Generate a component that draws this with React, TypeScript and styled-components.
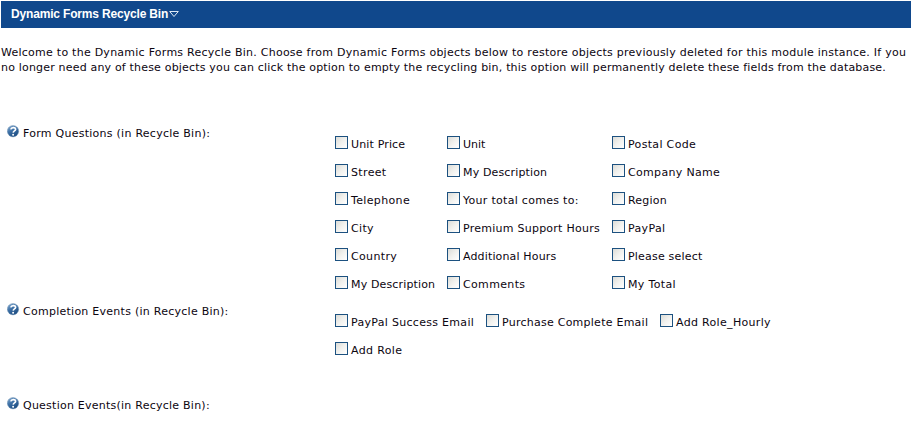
import React from "react";
import styled, { createGlobalStyle } from "styled-components";

const GlobalStyle = createGlobalStyle`
  * { box-sizing: border-box; }
  body {
    margin: 0;
    background: #fff;
    color: #0c0510;
    font: 11px/15px Verdana, "DejaVu Sans", sans-serif;
  }
`;

const Page = styled.main`
  width: 918px;
  height: 441px;
  padding: 1px 0 0 1px;
  overflow: hidden;
`;

const TitleBar = styled.header`
  display: flex;
  align-items: center;
  width: 910px;
  height: 27px;
  padding: 0 0 1px 10px;
  background: #10488c;
`;

const Title = styled.h1`
  margin: 0;
  color: #fff;
  font: bold 12px/15px Arial, "Liberation Sans", sans-serif;
  letter-spacing: -0.17px;
`;

const Arrow = styled.svg`
  display: block;
  margin-left: 1px;
`;

const Intro = styled.p`
  margin: 17px 0 0;
  white-space: nowrap;
`;

const Line = styled.span<{ $spacing: number }>`
  display: block;
  letter-spacing: ${(p) => p.$spacing}px;
`;

const Sections = styled.div`
  padding-top: 50px;
`;

const Section = styled.section<{ $height: number }>`
  display: grid;
  grid-template-columns: 334px 1fr;
  height: ${(p) => p.$height}px;
`;

const SectionLabel = styled.div<{ $spacing: number }>`
  display: flex;
  align-items: flex-start;
  gap: 3px;
  padding-left: 6px;
  letter-spacing: ${(p) => p.$spacing}px;
  white-space: nowrap;
`;

const LabelText = styled.span`
  padding-top: 1px;
`;

const Options = styled.div<{ $columns: string }>`
  display: grid;
  grid-template-columns: ${(p) => p.$columns};
  grid-auto-rows: 28px;
  padding-top: 11px;
`;

const Option = styled.label<{ $spacing: number }>`
  display: flex;
  align-items: flex-start;
  gap: 3px;
  letter-spacing: ${(p) => p.$spacing}px;
  white-space: nowrap;
`;

const OptionText = styled.span`
  padding-top: 1px;
`;

const Checkbox = styled.input`
  appearance: none;
  flex: none;
  width: 13px;
  height: 13px;
  margin: 0;
  border: 1px solid #1c5180;
  background: linear-gradient(135deg, #dcdcd7 0%, #f1f1ee 50%, #fff 100%);
`;

function HelpIcon() {
  return (
    <svg width="13" height="13" viewBox="0 0 13 13" aria-hidden="true">
      <defs>
        <linearGradient id="help" x1="0" y1="0" x2="0.6" y2="1">
          <stop offset="0" stopColor="#8fb4d6" />
          <stop offset="0.5" stopColor="#3d70a6" />
          <stop offset="1" stopColor="#1d4d82" />
        </linearGradient>
      </defs>
      <circle cx="6" cy="6.2" r="5.7" fill="url(#help)" stroke="#7d9cba" strokeWidth="0.5" />
      <path d="M3.8 4.4C4.3 2 8.7 2 8.6 4.3C8.6 5.9 6.3 5.8 6.2 7.6" fill="none" stroke="#fff" strokeWidth="1.7" />
      <circle cx="6.1" cy="9.7" r="1" fill="#fff" />
    </svg>
  );
}

type Item = [string, number];
type Group = { label: string; spacing: number; height: number; columns: string; items: Item[] };

const groups: Group[] = [
  {
    label: "Form Questions (in Recycle Bin):",
    spacing: 0.26,
    height: 178,
    columns: "112px 165px 1fr",
    items: [
      ["Unit Price", 0.15], ["Unit", 0], ["Postal Code", 0.33],
      ["Street", 0.35], ["My Description", 0.15], ["Company Name", 0.32],
      ["Telephone", 0.35], ["Your total comes to:", 0.29], ["Region", 0.2],
      ["City", 0.35], ["Premium Support Hours", 0.25], ["PayPal", 0.35],
      ["Country", 0.35], ["Additional Hours", 0.15], ["Please select", 0.2],
      ["My Description", 0.15], ["Comments", 0.35], ["My Total", 0.35],
    ],
  },
  {
    label: "Completion Events (in Recycle Bin):",
    spacing: 0.26,
    height: 94,
    columns: "151px 174px 1fr",
    items: [["PayPal Success Email", 0.3], ["Purchase Complete Email", 0.25], ["Add Role_Hourly", 0.32], ["Add Role", 0.35]],
  },
  { label: "Question Events(in Recycle Bin):", spacing: 0.24, height: 30, columns: "1fr", items: [] },
];

export default function App() {
  return (
    <>
      <GlobalStyle />
      <Page>
        <TitleBar>
          <Title>Dynamic Forms Recycle Bin</Title>
          <Arrow width="10" height="7" viewBox="0 0 10 7" aria-hidden="true">
            <path d="M0.7 0.5H9.3L5 5.5Z" fill="none" stroke="#dce8f5" strokeWidth="1" />
          </Arrow>
        </TitleBar>
        <Intro>
          <Line $spacing={0.25}>
            Welcome to the Dynamic Forms Recycle Bin. Choose from Dynamic Forms objects below to restore objects previously deleted for this module instance. If you
          </Line>
          <Line $spacing={0.185}>
            no longer need any of these objects you can click the option to empty the recycling bin, this option will permanently delete these fields from the database.
          </Line>
        </Intro>
        <Sections>
          {groups.map((g) => (
            <Section key={g.label} $height={g.height}>
              <SectionLabel $spacing={g.spacing}>
                <HelpIcon />
                <LabelText>{g.label}</LabelText>
              </SectionLabel>
              <Options $columns={g.columns}>
                {g.items.map(([text, spacing], i) => (
                  <Option key={i} $spacing={spacing}>
                    <Checkbox type="checkbox" />
                    <OptionText>{text}</OptionText>
                  </Option>
                ))}
              </Options>
            </Section>
          ))}
        </Sections>
      </Page>
    </>
  );
}
